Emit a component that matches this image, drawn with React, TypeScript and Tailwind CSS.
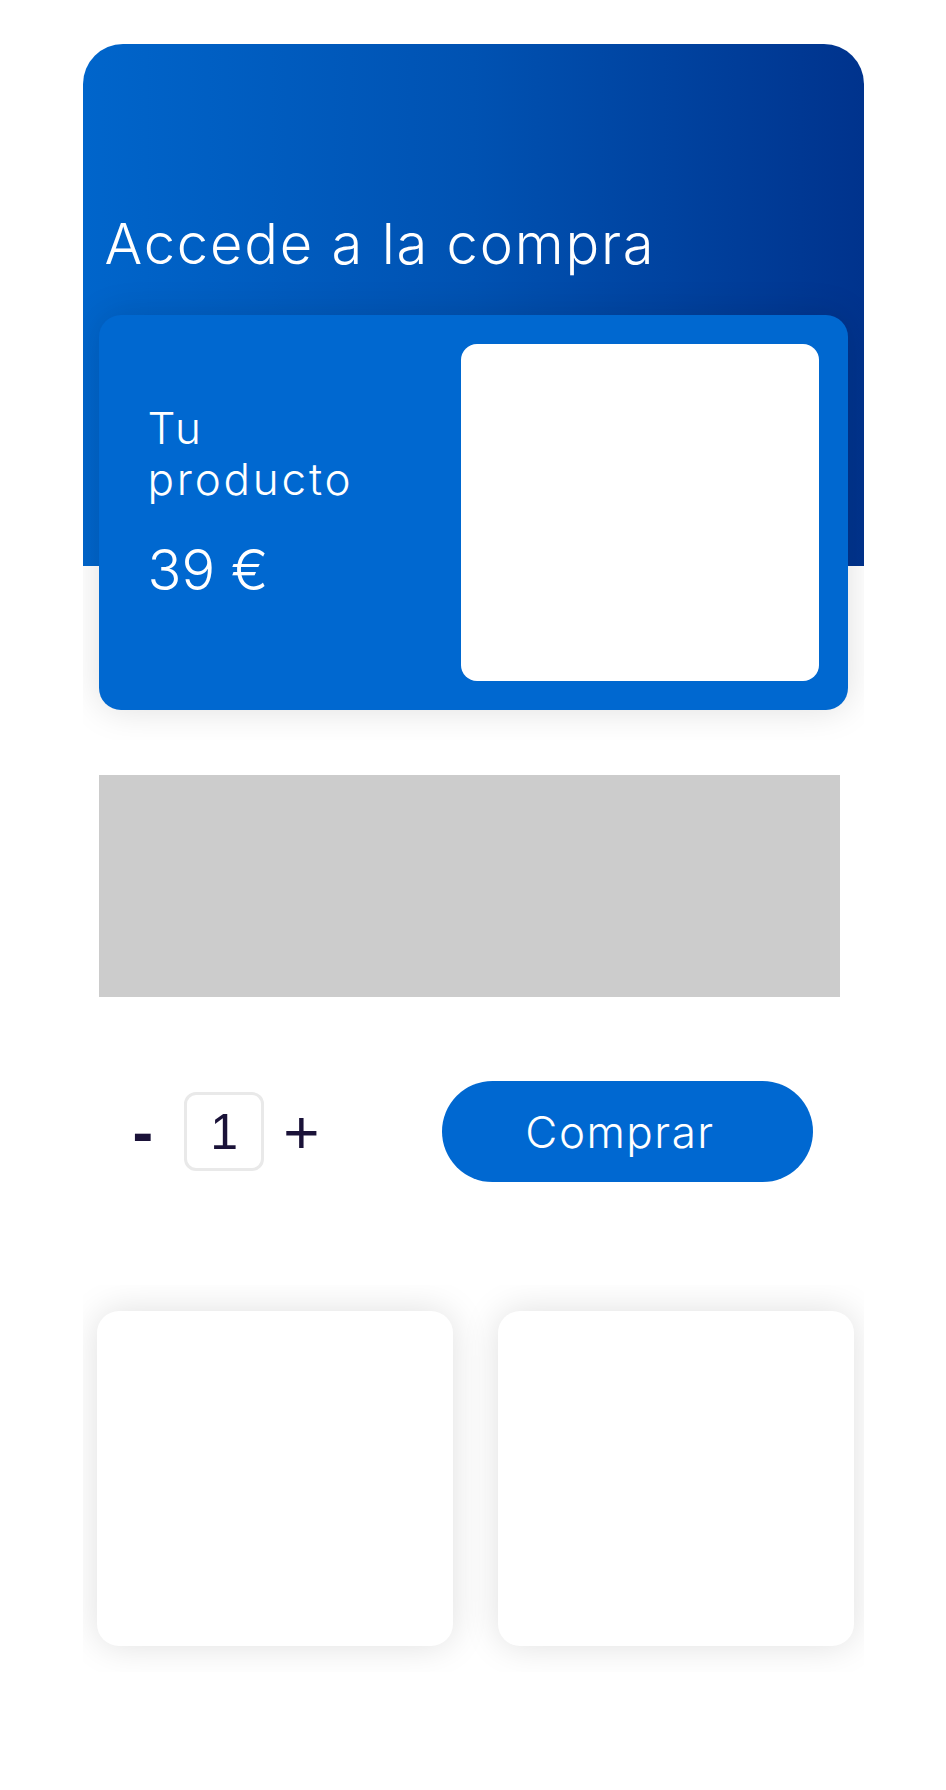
import { useState } from "react";

const sans = "font-['Inter','Noto_Sans',sans-serif]";

function ProductCard() {
  return (
    <div className="relative -mt-[251px] mx-[16px] flex justify-between rounded-[22px] bg-[#0068d0] p-[29px] shadow-[0_0_36px_rgba(0,0,0,0.13)]">
      <div className={`pl-[20px] pt-[59px] text-white ${sans}`}>
        <h2 className="max-w-[220px] text-[44px] font-light leading-[51px] tracking-[2.8px]">
          Tu producto
        </h2>
        <p className="mt-[37px] text-[56px] font-light leading-none">
          39 €
        </p>
      </div>
      <div className="h-[337px] w-[358px] rounded-[16px] bg-white" />
    </div>
  );
}

function Quantity() {
  const [qty, setQty] = useState(1);
  return (
    <div className="flex items-center font-['Liberation_Sans',Arial,sans-serif] text-[#1a1238]">
      <button
        onClick={() => setQty((q) => Math.max(1, q - 1))}
        className="text-[62px] font-bold leading-none"
      >
        -
      </button>
      <input
        value={qty}
        readOnly
        className="ml-[31px] h-[79px] w-[80px] rounded-[12px] border-[3px] border-[#e9e9e9] bg-white text-center font-['Liberation_Sans',Arial,sans-serif] text-[50px] leading-none outline-none"
      />
      <button
        onClick={() => setQty((q) => q + 1)}
        className="ml-[19px] text-[62px] font-normal leading-none"
      >
        +
      </button>
    </div>
  );
}

export default function App() {
  return (
    <div className="min-h-[1790px] bg-white">
      <div className="mx-auto w-[781px] pt-[44px]">
        <section className="overflow-hidden pb-[30px]">
          <div className="h-[522px] rounded-t-[40px] bg-[linear-gradient(90deg,#0065cb_0%,#0052b2_50%,#00338d_100%)] pl-[22px] pt-[172px]">
            <h1
              className={`text-[56px] font-light leading-none tracking-[1.8px] text-white ${sans}`}
            >
              Accede a la compra
            </h1>
          </div>
          <ProductCard />
        </section>

        <div className="ml-[16px] mt-[35px] h-[222px] w-[741px] bg-[#cccccc]" />

        <div className="mt-[84px] flex items-center pl-[50px] pr-[51px]">
          <Quantity />
          <button
            className={`ml-auto h-[101px] w-[371px] rounded-full bg-[#0068d1] pr-[14px] text-[44px] font-light tracking-[1.5px] text-white ${sans}`}
          >
            Comprar
          </button>
        </div>

        <section className="mt-[103px] flex gap-[45px] overflow-hidden pb-[26px] pl-[14px] pr-[10px] pt-[26px]">
          <div className="h-[335px] w-[356px] rounded-[22px] bg-white shadow-[0_0_36px_rgba(0,0,0,0.13)]" />
          <div className="h-[335px] w-[356px] rounded-[22px] bg-white shadow-[0_0_36px_rgba(0,0,0,0.13)]" />
        </section>
      </div>
    </div>
  );
}
